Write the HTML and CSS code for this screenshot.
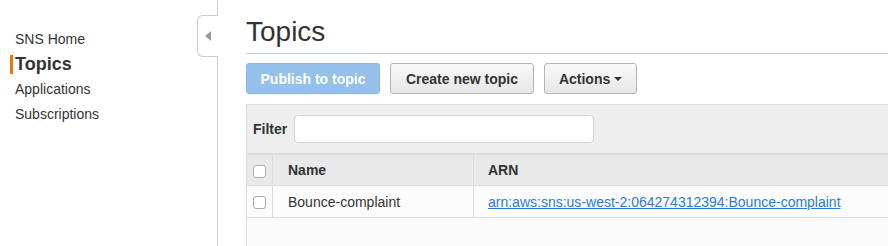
FILE: index.html
```html
<!DOCTYPE html>
<html lang="en">
<head>
    <meta charset="UTF-8">
    <title>SNS - Topics</title>
    <link rel="stylesheet" href="styles.css">
</head>
<body>
    <div class="layout">
        <div class="sidebar">
            <ul class="nav">
                <li><a href="#">SNS Home</a></li>
                <li class="active"><a href="#">Topics</a></li>
                <li><a href="#">Applications</a></li>
                <li><a href="#">Subscriptions</a></li>
            </ul>
            <div class="collapse-tab"><span class="arrow"></span></div>
        </div>
        <div class="main">
            <h1 class="page-title">Topics</h1>
            <div class="toolbar">
                <button class="btn btn-primary" disabled>Publish to topic</button>
                <button class="btn btn-create">Create new topic</button>
                <button class="btn btn-menu">Actions <span class="caret"></span></button>
            </div>
            <div class="panel">
                <div class="filter-bar">
                    <label class="filter-label">Filter</label>
                    <input class="filter-input" type="text">
                </div>
                <table class="topics">
                    <thead>
                        <tr>
                            <th class="col-check"><span class="checkbox"></span></th>
                            <th class="col-name">Name</th>
                            <th class="col-arn">ARN</th>
                        </tr>
                    </thead>
                    <tbody>
                        <tr>
                            <td class="col-check"><span class="checkbox"></span></td>
                            <td class="col-name">Bounce-complaint</td>
                            <td class="col-arn"><a href="#">arn:aws:sns:us-west-2:064274312394:Bounce-complaint</a></td>
                        </tr>
                    </tbody>
                </table>
                <div class="empty-space"></div>
            </div>
        </div>
    </div>
</body>
</html>
```
FILE: styles.css
```css
body {
    margin: 0;
    font-family: "Liberation Sans", Arial, sans-serif;
    color: #333;
    background: #fff;
    overflow: hidden;
}

.layout {
    display: flex;
    height: 246px;
}

.sidebar {
    position: relative;
    width: 217px;
    flex: none;
    border-right: 1px solid #d0d0d0;
}

.nav {
    list-style: none;
    margin: 0;
    padding: 27px 0 0 0;
}

.nav li {
    height: 25px;
    line-height: 25px;
    padding-left: 15px;
    font-size: 14px;
}

.nav a {
    color: #333;
    text-decoration: none;
}

.nav li.active {
    padding-left: 10px;
    font-size: 18px;
    font-weight: bold;
}

.nav li.active a {
    border-left: 3px solid #e47911;
    padding-left: 2px;
    display: inline-block;
    line-height: 19px;
    margin-top: 3px;
}

/* tab that sits over the sidebar border */
.collapse-tab {
    position: absolute;
    top: 15px;
    right: -1px;
    width: 20px;
    height: 40px;
    background: #fff;
    border: 1px solid #ccc;
    border-right: none;
    border-radius: 6px 0 0 6px;
}

.arrow {
    position: absolute;
    left: 7px;
    top: 15px;
    width: 0;
    height: 0;
    border-top: 5px solid transparent;
    border-bottom: 5px solid transparent;
    border-right: 6px solid #999;
}

.main {
    flex: 1;
    min-width: 0;
    padding-left: 28px;
}

.page-title {
    margin: 16px 0 0 0;
    font-size: 28px;
    font-weight: normal;
    line-height: 32px;
    color: #333;
    padding-bottom: 5px;
    border-bottom: 1px solid #ccc;
}

.toolbar {
    display: flex;
    gap: 10px;
    margin-top: 9px;
}

.btn {
    height: 31px;
    padding: 0;
    white-space: nowrap;
    font-family: "Liberation Sans", Arial, sans-serif;
    font-size: 14px;
    font-weight: bold;
    color: #333;
    background: linear-gradient(#fafafa, #e6e6e6);
    border: 1px solid #b5b5b5;
    border-radius: 3px;
}

.btn-primary {
    width: 134px;
    color: #fff;
    background: #94c0ea;
    border-color: #8ab8e6;
}

.btn-create {
    width: 144px;
}

.btn-menu {
    width: 93px;
}

.caret {
    display: inline-block;
    vertical-align: middle;
    margin-top: -2px;
    border-left: 4px solid transparent;
    border-right: 4px solid transparent;
    border-top: 4px solid #333;
}

.panel {
    margin-top: 10px;
    border: 1px solid #ddd;
    border-right: none;
    background: #fbfbfb;
}

.filter-bar {
    display: flex;
    align-items: center;
    gap: 7px;
    height: 48px;
    padding-left: 6px;
    background: #eee;
    border-bottom: 2px solid #dcdcdc;
}

.filter-label {
    font-size: 14px;
    font-weight: bold;
}

.filter-input {
    width: 298px;
    height: 26px;
    padding: 0;
    border: 1px solid #d5d5d5;
    border-radius: 4px;
    background: #fff;
}

.topics {
    width: 100%;
    border-collapse: collapse;
    font-size: 14px;
}

.topics th,
.topics td {
    padding: 0;
    vertical-align: middle;
}

.topics th {
    height: 30px;
    text-align: left;
    background: #e9e9e9;
    font-weight: bold;
    border-bottom: 1px solid #ddd;
}

.topics td {
    height: 31px;
    background: #fcfcfc;
    border-bottom: 1px solid #ddd;
}

.topics .col-check {
    width: 25px;
    text-align: center;
    border-right: 1px solid #ddd;
}

.topics .col-name {
    width: 185px;
    padding-left: 15px;
    border-right: 1px solid #ddd;
}

.topics .col-arn {
    padding-left: 14px;
}

.col-arn a {
    color: #2b7bd6;
}

.checkbox {
    display: inline-block;
    vertical-align: middle;
    width: 11px;
    height: 11px;
    border: 1px solid #aaa;
    border-radius: 3px;
    background: #fff;
}

.empty-space {
    height: 30px;
    background: #fbfbfb;
}
```
